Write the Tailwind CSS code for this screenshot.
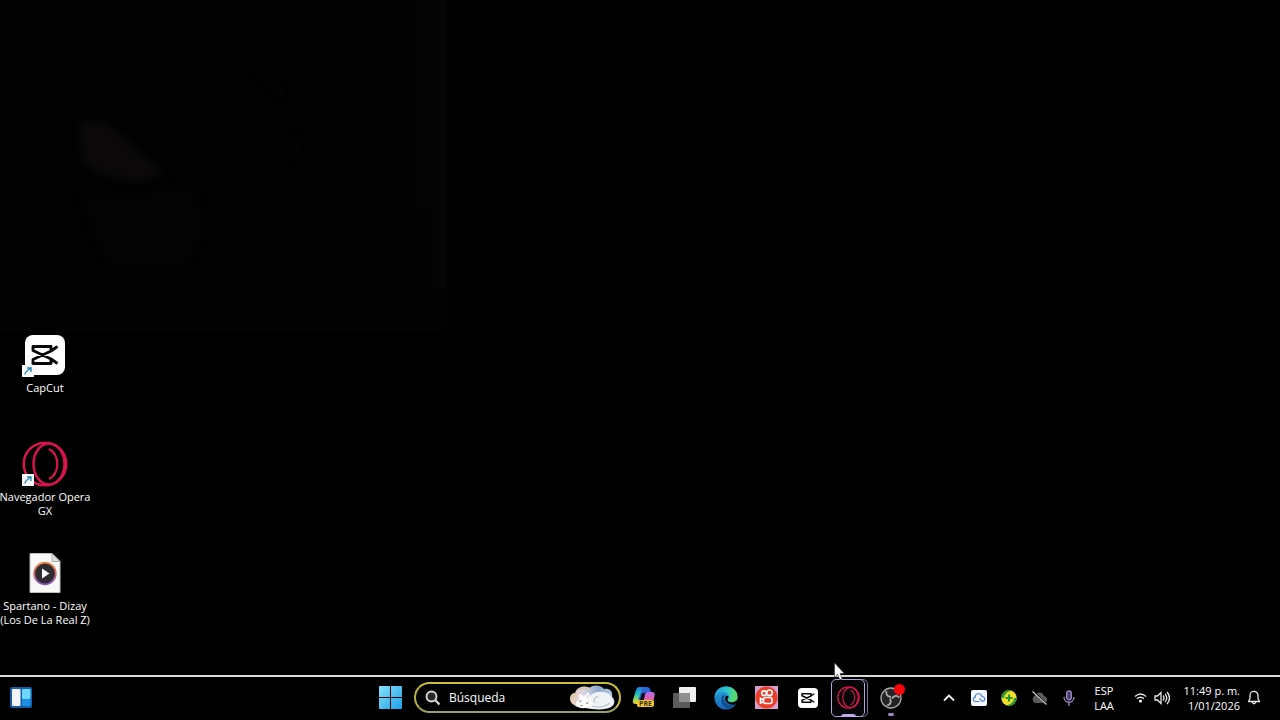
<!DOCTYPE html>
<html lang="es">
<head>
<meta charset="utf-8">
<meta name="viewport" content="width=device-width, initial-scale=1">
<title>Escritorio</title>
<script src="https://cdn.jsdelivr.net/npm/@tailwindcss/browser@4"></script>
</head>
<body class="flex h-screen flex-col overflow-hidden bg-black font-['Open_Sans','Noto_Sans',sans-serif] font-medium text-white">
<svg class="hidden" aria-hidden="true">
  <defs>
    <symbol id="capcut" viewBox="0 0 28 20">
      <path d="M26.500 1.500 20 6 2 14.500V18.500h18V14M26.500 18.500 20 14 2 5.500V1.500h18V6" fill="none" stroke="#080808" stroke-width="2.900" stroke-linejoin="round"/>
    </symbol>
    <symbol id="opera" viewBox="0 0 46 46">
      <g fill="none" stroke="#d8154b" stroke-width="2.500">
        <circle cx="23" cy="23" r="21.300"/>
        <ellipse cx="27" cy="23" rx="15.500" ry="20.500"/>
        <path d="M27 8c11 6 11 24 0 30" stroke-width="2.200"/>
      </g>
    </symbol>
    <symbol id="shortcut" viewBox="0 0 12 12">
      <path d="M0 0h12v12H0z" fill="#fafafa"/>
      <path d="M3 9.500C3 7 5 5.500 8.500 3.500M5 3h4v4" fill="none" stroke="#2487b8" stroke-width="1.400"/>
    </symbol>
  </defs>
</svg>

<main class="relative flex min-h-0 flex-1 flex-col justify-end pb-[17px]">
  <svg class="absolute top-0 left-0" width="448" height="333" viewBox="0 0 448 333" aria-hidden="true">
    <defs><filter id="soft" color-interpolation-filters="sRGB"><feGaussianBlur stdDeviation="3"/></filter></defs>
    <path d="M0 0h447v333H0z" fill="#020202"/>
    <path d="M414 0h33v288h-14v-80h-18z" fill="#040404"/>
    <g filter="url(#soft)">
      <path d="M78 122q25-5 40 10l48 43-30 7q-40-4-54-22z" fill="#0a0808"/>
      <path d="M245 52l38 43M293 136v22" stroke="#040505" stroke-width="6"/>
      <path d="M80 200l115-12 10 40-20 40H110z" fill="#040404"/>
    </g>
  </svg>

  <nav class="relative w-[90px] text-center text-[11px] leading-[14px] whitespace-nowrap" aria-label="Accesos directos">
    <a href="#capcut-app" class="flex h-[109px] flex-col items-center">
      <span class="relative mb-[2px] flex h-12 w-12 items-center justify-center">
        <span class="flex h-10 w-10 items-center justify-center rounded-lg bg-white"><svg width="28" height="20"><use href="#capcut"/></svg></span>
        <svg class="absolute bottom-[2px] left-[1px]" width="12" height="12"><use href="#shortcut"/></svg>
      </span>
      CapCut
    </a>
    <a href="#opera-gx" class="flex h-[109px] flex-col items-center">
      <span class="relative mb-[2px] flex h-12 w-12 items-center justify-center">
        <svg width="46" height="46"><use href="#opera"/></svg>
        <svg class="absolute bottom-[2px] left-[1px]" width="12" height="12"><use href="#shortcut"/></svg>
      </span>
      <span>Navegador Opera<br>GX</span>
    </a>
    <a href="#spartano" class="flex h-[109px] flex-col items-center">
      <span class="mb-[2px] flex h-12 w-12 items-center justify-center">
        <svg width="32" height="40" viewBox="0 0 32 40">
          <defs><linearGradient id="ring" x1="0" y1="0" x2="0" y2="1"><stop stop-color="#f08a42"/><stop offset=".5" stop-color="#d26a67"/><stop offset="1" stop-color="#8653c9"/></linearGradient></defs>
          <path d="M1 .5h22l8 8v31H1z" fill="#f8f8f8" stroke="#bdbdbd"/>
          <path d="M23 .5v8h8z" fill="#dedede" stroke="#9d9d9d" stroke-width=".8"/>
          <circle cx="16" cy="20.500" r="10.800" fill="#2e2c31" stroke="url(#ring)" stroke-width="1.800"/>
          <path d="M13 15.500v10l7.500-5z" fill="#fff"/>
        </svg>
      </span>
      <span>Spartano - Dizay<br>(Los De La Real Z)</span>
    </a>
  </nav>
</main>

<footer class="grid h-[45px] shrink-0 grid-cols-[1fr_auto_1fr] items-center border-t-2 border-[#d8dad8] bg-black pb-[2px]">
  <div class="flex items-center pl-[10px]">
    <button type="button" aria-label="Widgets">
      <svg width="22" height="21" viewBox="0 0 22 21">
        <rect width="22" height="21" rx="2" fill="#125ea8"/>
        <rect x="2" y="2" width="8.500" height="17" rx="1" fill="#f4f6fb"/>
        <rect x="12" y="2" width="8.500" height="10" rx="1" fill="#6cd6fb"/>
        <rect x="12" y="12" width="8.500" height="7" rx="1" fill="#1b8fe4"/>
      </svg>
    </button>
  </div>

  <div class="flex items-center pr-[1px]">
    <button type="button" aria-label="Inicio" class="flex w-[41px] justify-center">
      <svg class="ml-[2px]" width="23" height="23" viewBox="0 0 23 23">
        <defs><linearGradient id="win" x1="0" y1="0" x2="1" y2="1"><stop stop-color="#86e3fb"/><stop offset="1" stop-color="#1c9fe8"/></linearGradient></defs>
        <path d="M0 1q0-1 1-1h10v11H0zM12 0h10q1 0 1 1v10H12zM0 12h11v11H1q-1 0-1-1zM12 12h11v10q0 1-1 1H12z" fill="url(#win)"/>
      </svg>
    </button>

    <label class="mr-[2px] ml-1 flex h-[31px] w-[207px] items-center rounded-full border-2 border-t-[#c9bd3c] border-r-[#c9bd3c] border-b-[#9a9f62] border-l-[#b5ae48] pr-[3px] pl-[9px]">
      <svg class="shrink-0" width="16" height="16" viewBox="0 0 16 16"><circle cx="6.500" cy="6.500" r="5" fill="#292929" stroke="#d8d8d8" stroke-width="1.900"/><path d="M10.300 10.300 14.500 14.500" stroke="#d8d8d8" stroke-width="2.200"/></svg>
      <input type="text" placeholder="Búsqueda" aria-label="Búsqueda" class="ml-2 min-w-0 flex-1 bg-transparent text-[12px] font-medium text-white outline-none placeholder:text-white">
      <svg class="shrink-0" width="47" height="25" viewBox="0 0 47 25" aria-hidden="true">
        <defs><linearGradient id="cloud"><stop stop-color="#eccbb3"/><stop offset=".3" stop-color="#d9d5e2"/><stop offset=".65" stop-color="#8da9c9"/><stop offset="1" stop-color="#bfd4ee"/></linearGradient></defs>
        <path d="M5 20C-1 17 0 8 6 8 8 2 15 0 20 3 25-1 32 0 35 4c6-1 9 3 8 8 4 3 3 9-2 10H8z" fill="url(#cloud)"/>
        <path d="M10 5q6-4 11-1M3 14q0-5 4-5" stroke="#d7c8a6" stroke-width="2" fill="none"/>
        <path d="M21 11c4-5 15-6 20-1 4 4 5 9 1 12-4 3-16 3-26 1z" fill="#f0f2f5"/>
        <path d="M10 9q3 0 5 2.500l4-4.500q2 2 2 6 4 5 0 8-6 4-12 1-4-3-1-6 3-1 2-7z" fill="#fcfcfd"/>
        <path d="M23 21q10 3 18-3M29 11q-6 3-3 7" stroke="#b6c0cb" stroke-width="1.200" fill="none"/>
        <path d="M10 16q1.500 1 2.500-.5M17 18q1.500 1 2.500-.5M11.500 20.500h2" stroke="#596171" stroke-width=".9" fill="none"/>
        <path d="m18.500 10 .5 3" stroke="#dbc6c3" stroke-width="1.200"/>
      </svg>
    </label>

    <button type="button" aria-label="Copilot" class="relative flex w-[41px] justify-center">
      <svg width="24" height="23" viewBox="0 0 24 23" aria-hidden="true">
        <defs>
          <linearGradient id="coA" x1="0" y1="0" x2="0" y2="1"><stop stop-color="#2b75e9"/><stop offset=".45" stop-color="#22c7b5"/><stop offset=".75" stop-color="#9fd84b"/><stop offset="1" stop-color="#f2ce38"/></linearGradient>
          <linearGradient id="coB" x1="0" y1="0" x2="0" y2="1"><stop stop-color="#b36af0"/><stop offset=".5" stop-color="#e861a5"/><stop offset="1" stop-color="#f29c58"/></linearGradient>
        </defs>
        <path d="M7 1h7q2 0 3 4l-5 1-3 10q-1 2-3 2H4q-4 0-3-4L4 4Q5 1 7 1z" fill="url(#coA)"/>
        <path d="M15 6h5q3.500 0 2.500 4l-2 8q-1 3-4 3h-8q-2 0-3-3 4 0 5-2l2.500-8q1-2 2-2z" fill="url(#coB)"/>
        <path d="M11 1h4q3 0 4 5h-4q-2 0-3 3l-3 7-3-2z" fill="#2b65d8"/>
        <path d="M10 7 7 17l3-.5q2-1 3-9z" fill="#07090c"/>
      </svg>
      <span class="absolute top-[14px] left-[14px] rounded-[2px] bg-[#f4c92c] px-[2px] text-[7px] leading-[7px] font-bold text-[#3b3210]">PRE</span>
    </button>
    <button type="button" aria-label="Vista de tareas" class="flex w-[41px] justify-center">
      <svg width="23" height="21" viewBox="0 0 23 21"><rect x="6" width="17" height="15" rx="1" fill="#eeeeee"/><path d="M1 6h15q1 0 1 1v13q0 1-1 1H1q-1 0-1-1V7q0-1 1-1z" fill="#5b5b5b"/><path d="M6 6h10q1 0 1 1v8H6z" fill="#8f8f8f"/></svg>
    </button>
    <button type="button" aria-label="Microsoft Edge" class="flex w-[41px] justify-center">
      <svg width="24" height="24" viewBox="0 0 24 24">
        <defs>
          <linearGradient id="edA" x1="0" y1=".3" x2="1" y2=".5"><stop stop-color="#1f9fe0"/><stop offset=".5" stop-color="#2cc5cf"/><stop offset="1" stop-color="#62de58"/></linearGradient>
          <linearGradient id="edB" x1="0" y1="0" x2="0" y2="1"><stop stop-color="#27a9df"/><stop offset="1" stop-color="#1564b9"/></linearGradient>
        </defs>
        <circle cx="12" cy="12" r="11.500" fill="url(#edB)"/>
        <path d="M.6 11C1 4.500 6 .5 12 .5 19 .5 23.500 5 23.500 10.500c0 4-3 5.500-5.500 5.500-3 0-4.500-1-4.500-2s1.500-1.500 1.500-3.500C15 8 12 6 8.500 6 5 6 2 8 .6 11z" fill="url(#edA)"/>
        <path d="M9.500 9C6 11 6 20 14 23q5-.5 8-5.500-3 1.500-6 1.200C10.500 18 8 13 11 9.500z" fill="#114d91"/>
        <path d="M11.500 10.500q2.500-1 3 .5c-.3 2-1.500 2-1 3.500 1.500 2.500 6 2.500 9 0l1.500 1v2l-2 .5c-4.500 2-11-1-11-5.500 0-1 0-1.500.5-2z" fill="#000"/>
      </svg>
    </button>
    <button type="button" aria-label="Kwai" class="flex w-[41px] justify-center">
      <svg width="23" height="23" viewBox="0 0 23 23">
        <path d="M0 0h23v23H0z" fill="#d5a0cf"/><circle cx="11.500" cy="11.500" r="11" fill="#e93f28"/>
        <g fill="none" stroke="#fff" stroke-width="1.600"><circle cx="9" cy="7.200" r="2.300"/><circle cx="14.500" cy="6.800" r="2.800"/><rect x="8.500" y="11.500" width="8.500" height="6" rx="2"/><path d="m8.500 13.800-3-1.300v4.500l3-1.300"/></g>
      </svg>
    </button>
    <button type="button" aria-label="CapCut" class="flex w-[41px] justify-center">
      <span class="flex h-5 w-5 items-center justify-center rounded bg-white"><svg width="14" height="10"><use href="#capcut"/></svg></span>
    </button>
    <button type="button" aria-label="Opera GX" class="relative flex h-[38px] w-[41px] items-center justify-center">
      <span class="absolute inset-y-0 right-[1px] left-[9px] rounded-[5px] border border-[#86769f]"></span>
      <span class="absolute inset-y-0 right-[4px] left-[3px] rounded-[5px] border border-[#b5a2dc] bg-[#050406]"></span>
      <svg class="relative" width="23" height="23"><use href="#opera"/></svg>
      <span class="absolute bottom-0 left-[13px] h-[3px] w-[15px] rounded-t-sm bg-[#c2a7ec]"></span>
    </button>
    <button type="button" aria-label="OBS Studio" class="relative flex h-[38px] w-[41px] items-center justify-center">
      <svg class="ml-[2px]" width="22" height="22" viewBox="0 0 22 22">
        <circle cx="11" cy="11" r="10" fill="#242326" stroke="#aaaaaa" stroke-width="1.300"/>
        <g fill="none" stroke="#a9a9a9" stroke-width="1.900"><path id="blade" d="M11 10Q5 9 6.500 4"/><use href="#blade" transform="rotate(120 11 11)"/><use href="#blade" transform="rotate(240 11 11)"/></g>
      </svg>
      <span class="absolute top-[5px] right-[5px] h-[11px] w-[11px] rounded-full bg-[#fa0509]"></span>
      <span class="absolute bottom-[1px] left-[19px] h-[3px] w-[6px] rounded-full bg-[#9d8bbd]"></span>
    </button>
  </div>

  <div class="flex items-center justify-end pr-[13px]">
    <button type="button" aria-label="Mostrar iconos ocultos" class="flex w-[30px] justify-center"><svg width="12" height="8" viewBox="0 0 12 8"><path d="m1 6.500 5-5 5 5" fill="none" stroke="#eeeeee" stroke-width="1.800"/></svg></button>
    <button type="button" aria-label="Nube" class="flex w-[30px] justify-center">
      <svg width="16" height="16" viewBox="0 0 16 16"><rect width="16" height="16" rx="2" fill="#f4f8ff"/><path d="M8.500 11.500H4.500a2.200 2.200 0 0 1-.2-4.400C4 3 10 2.500 11 6.500c3.500 0 3.500 5 .5 5L8.500 8.500" fill="none" stroke="#4c7fe0" stroke-width="1.200"/></svg>
    </button>
    <button type="button" aria-label="Seguridad" class="flex w-[30px] justify-center">
      <svg width="16" height="16" viewBox="0 0 16 16"><circle cx="8" cy="8" r="7.700" fill="#f0dc2a"/><path d="M.5 8A7.500 7.500 0 0 1 10 .6L6 2.500Q3 5 3 8zM15.500 8A7.500 7.500 0 0 1 6 15.400l4-1.900Q13 11 13 8z" fill="#239a36"/><path d="M8 4.500v7M4.500 8h7" stroke="#23952e" stroke-width="2"/></svg>
    </button>
    <button type="button" aria-label="OneDrive sin conexión" class="flex w-[30px] justify-center">
      <svg width="17" height="16" viewBox="0 0 17 16"><path d="M4.500 13a4 4 0 0 1-.5-7.500C6 1.500 12 1.500 13 6c4 1 4.500 6 0 7z" fill="#5c5c5c"/><path d="m2.500 1.500 13 13" stroke="#000" stroke-width="2"/><path d="m1.500 1.500 14 13" stroke="#c8c8c8" stroke-width="1.200"/></svg>
    </button>
    <button type="button" aria-label="Micrófono" class="flex w-[30px] justify-center">
      <svg width="12" height="16" viewBox="0 0 12 16"><g fill="none" stroke="#9f8bcd" stroke-width="1.300"><rect x="3.700" y=".8" width="4.600" height="9" rx="2.300" fill="#493c6a"/><path d="M1 7c0 7 10 7 10 0M6 12.500V16"/></g></svg>
    </button>
    <button type="button" class="w-10 text-center text-[11px] leading-[15px]">ESP<br>LAA</button>
    <button type="button" aria-label="Red y volumen" class="ml-[5px] flex items-center">
      <span class="flex w-[22px] justify-center"><svg width="13" height="11" viewBox="0 0 13 11"><g fill="none" stroke="#e8e8e8" stroke-width="1.300"><path d="M1 4.500q5.500-5 11 0M3 6.800q3.500-3.200 7 0"/></g><circle cx="6.500" cy="9" r="1.500" fill="#fff"/></svg></span>
      <span class="flex w-[22px] justify-center"><svg width="16" height="14" viewBox="0 0 16 14"><g fill="none" stroke="#e8e8e8" stroke-width="1.300"><path d="M1 5h2.500L7 1.500v11L3.500 9H1zM9 4.500q2 2.500 0 5M11 2.800q3.500 4.200 0 8.400M13 1q5 6 0 12"/></g></svg></span>
    </button>
    <button type="button" class="w-[67px] text-right text-[11px] leading-[15px] whitespace-nowrap">11:49 p. m.<br>1/01/2026</button>
    <button type="button" aria-label="Notificaciones" class="ml-[1px] flex w-[26px] justify-center">
      <svg width="14" height="15" viewBox="0 0 14 15"><path d="M1.500 11.500h11L11 8.500V5.500C11 0 3 0 3 5.500v3zM5 12q2 3.500 4 0" fill="none" stroke="#e8e8e8" stroke-width="1.300" stroke-linejoin="round"/></svg>
    </button>
  </div>
</footer>

<svg class="pointer-events-none absolute bottom-[39px] left-[834px]" width="12" height="19" viewBox="0 0 12 19" aria-hidden="true"><path d="M.5.8v14.500l3-2.800 2.300 5.300 2.500-1-2.300-5.300h4.300z" fill="#fff" stroke="#222" stroke-width=".6"/></svg>
</body>
</html>
